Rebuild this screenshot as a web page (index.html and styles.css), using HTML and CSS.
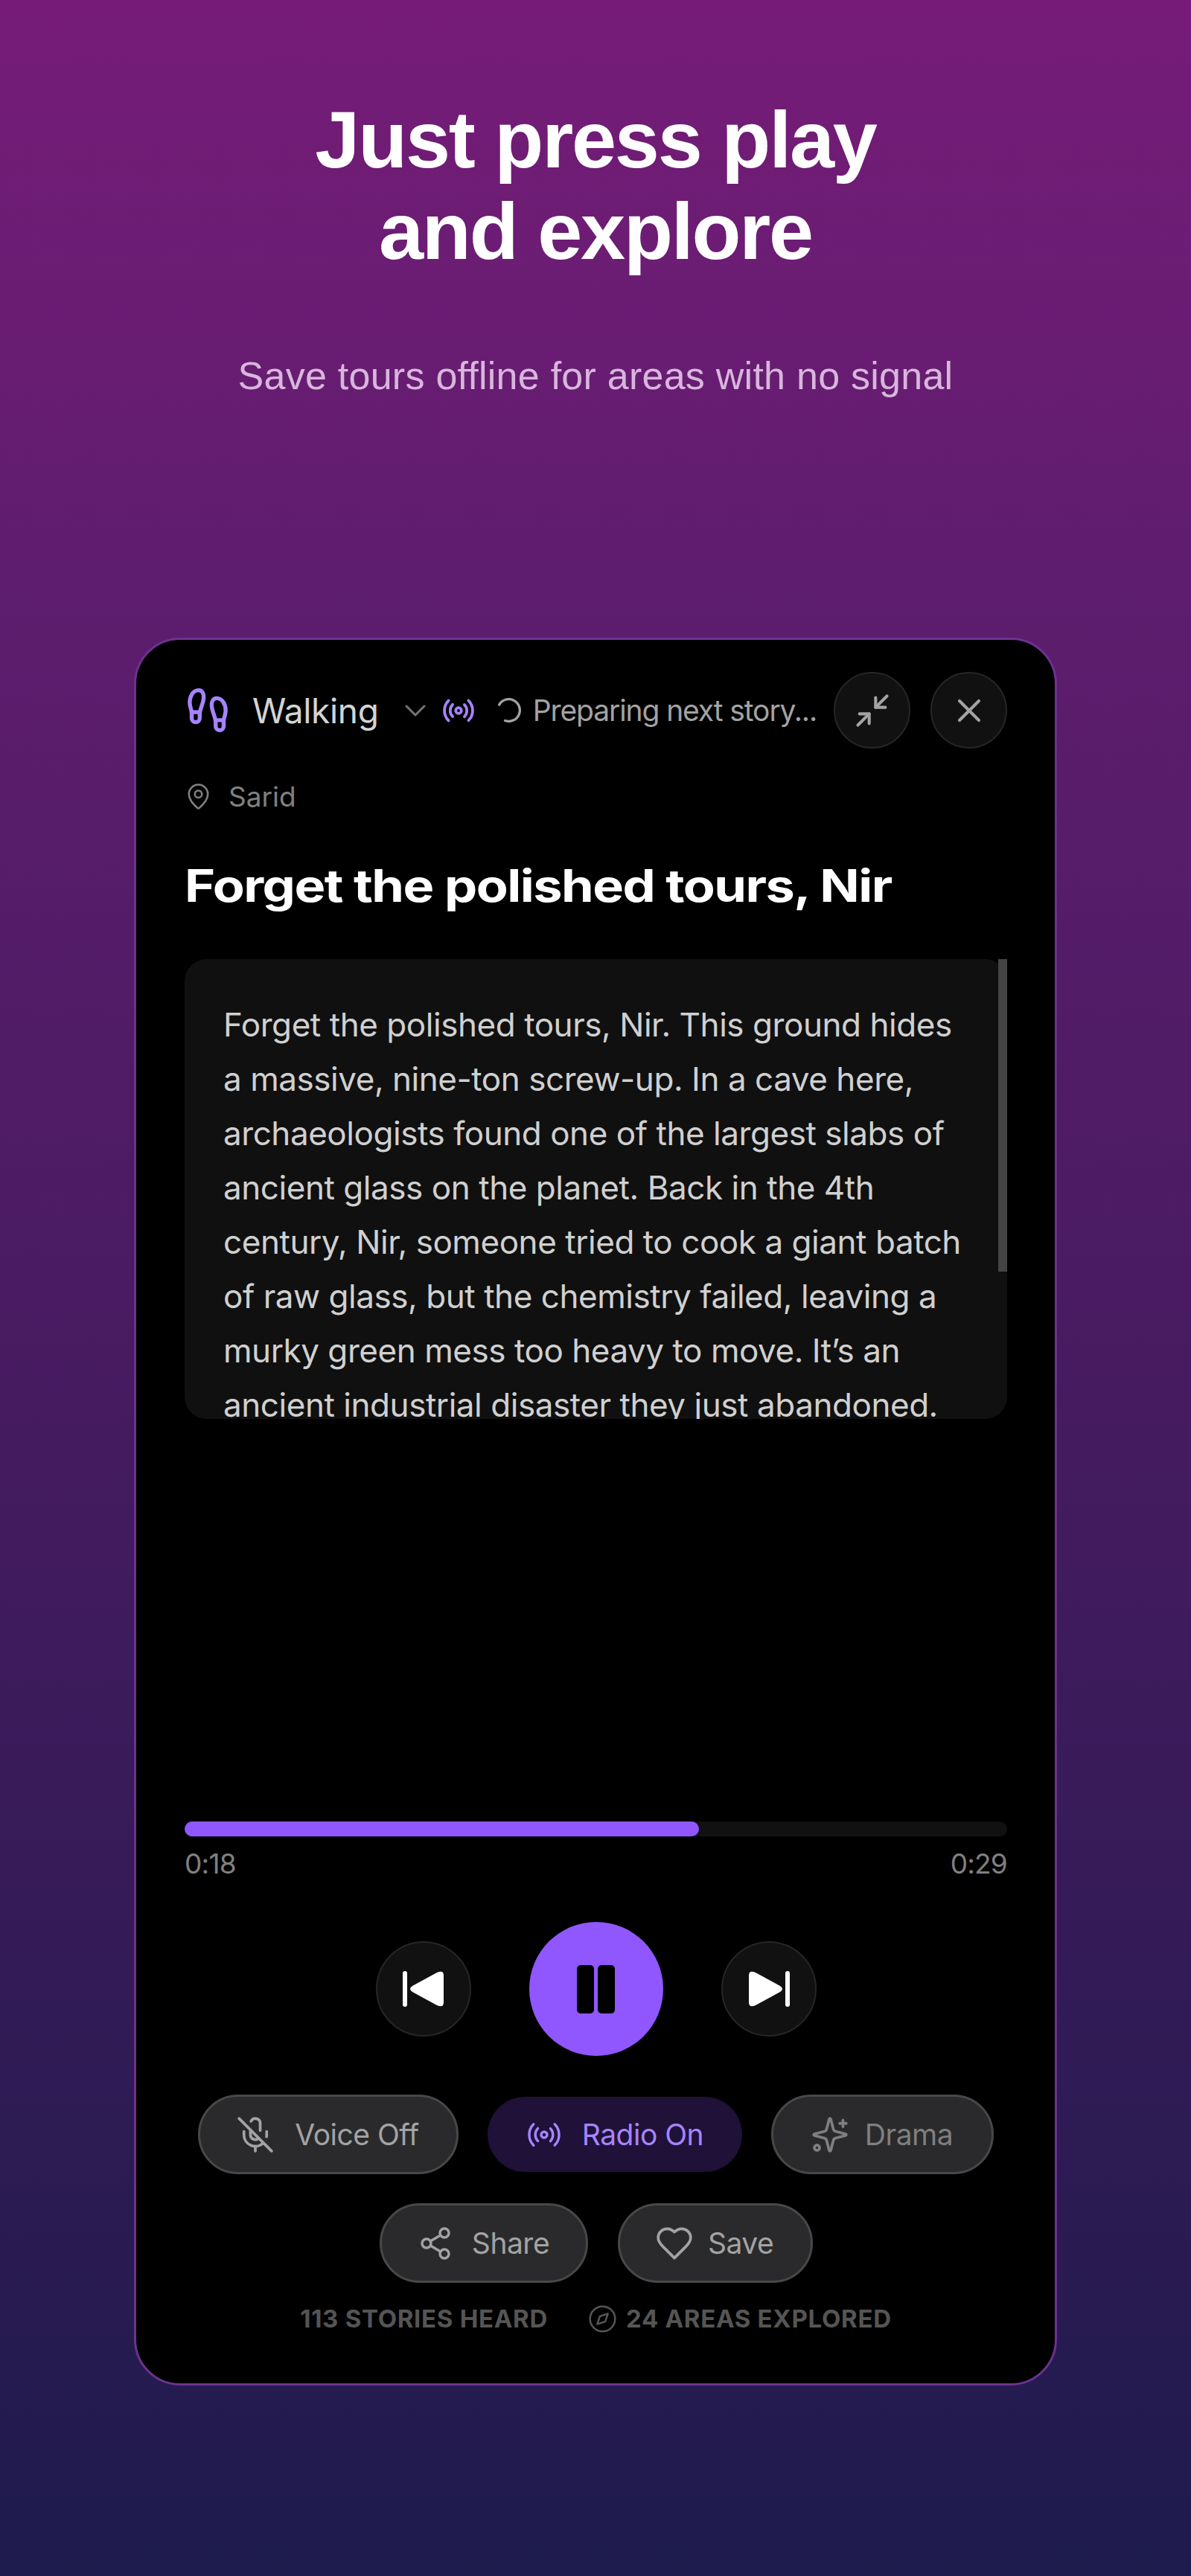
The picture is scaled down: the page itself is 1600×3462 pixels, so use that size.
FILE: index.html
```html
<!DOCTYPE html>
<html lang="en">
<head>
    <meta charset="UTF-8">
    <meta name="viewport" content="width=device-width, initial-scale=1.0">
    <title>Just press play and explore</title>
    <link rel="stylesheet" href="styles.css">
</head>
<body>

    <header class="hero">
        <h1>Just press play<br>and explore</h1>
        <p class="subtitle">Save tours offline for areas with no signal</p>
    </header>

    <main class="card">
        <div class="top-row">
            <svg class="icon icon-feet" viewBox="2 1 20 22"><path d="M4 16v-2.38C4 11.5 2.97 10.5 3 8c.03-2.72 1.49-6 4.5-6C9.37 2 10 3.8 10 5.5c0 3.11-2 5.66-2 8.68V16a2 2 0 1 1-4 0Z"/><path d="M20 20v-2.38c0-2.12 1.03-3.12 1-5.62-.03-2.72-1.49-6-4.5-6C14.63 6 14 7.8 14 9.5c0 3.11 2 5.66 2 8.68V20a2 2 0 1 0 4 0Z"/><path d="M16 17h4"/><path d="M4 13h4"/></svg>
            <span class="mode">Walking</span>
            <svg class="icon icon-chevron" viewBox="5 8 14 8"><path d="m6 9 6 6 6-6"/></svg>
            <svg class="icon icon-radio" viewBox="1 3 22 18"><path d="M4.9 19.1C1 15.2 1 8.8 4.9 4.9"/><path d="M7.8 16.2c-2.3-2.3-2.3-6.1 0-8.5"/><circle cx="12" cy="12" r="2"/><path d="M16.2 7.8c2.3 2.3 2.3 6.1 0 8.5"/><path d="M19.1 4.9C23 8.8 23 15.1 19.1 19"/></svg>
            <svg class="icon icon-spinner" viewBox="2 2 20 20"><path d="M4.2 7.5A9 9 0 1 1 9 20.5"/></svg>
            <span class="status">Preparing next story...</span>
            <button class="round-btn top-btn first"><svg class="icon" viewBox="0 0 24 24"><path d="m14 10 7-7"/><path d="M20 10h-6V4"/><path d="m3 21 7-7"/><path d="M4 14h6v6"/></svg></button>
            <button class="round-btn top-btn"><svg class="icon" viewBox="0 0 24 24"><path d="M18 6 6 18"/><path d="m6 6 12 12"/></svg></button>
        </div>

        <div class="place">
            <svg class="icon icon-pin" viewBox="3 1 18 22"><path d="M20 10c0 4.993-5.539 10.193-7.399 11.799a1 1 0 0 1-1.202 0C9.539 20.193 4 14.993 4 10a8 8 0 0 1 16 0"/><circle cx="12" cy="10" r="3"/></svg>
            <span>Sarid</span>
        </div>

        <h2 class="story-title">Forget the polished tours, Nir</h2>

        <section class="story">
            <div class="story-clip">
                <p>Forget the polished tours, Nir. This ground hides a massive, nine-ton screw-up. In a cave here, archaeologists found one of the largest slabs of ancient glass on the planet. Back in the 4th century, Nir, someone tried to cook a giant batch of raw glass, but the chemistry failed, leaving a murky green mess too heavy to move. It’s an ancient industrial disaster they just abandoned.</p>
            </div>
            <div class="scrollbar"></div>
        </section>

        <div class="progress"><div class="progress-fill" style="width: 62.5%"></div></div>
        <div class="times"><span>0:18</span><span>0:29</span></div>

        <div class="controls">
            <button class="round-btn skip">
                <svg viewBox="0 0 56 50"><rect x="0" y="1" width="6" height="48" rx="3"/><path d="M13 21 L46 3 Q55 -1 55 7 L55 43 Q55 51 46 47 L13 29 Q7 25 13 21 Z"/></svg>
            </button>
            <button class="play-btn"><span class="bar"></span><span class="bar"></span></button>
            <button class="round-btn skip">
                <svg viewBox="0 0 56 50"><path d="M43 21 L10 3 Q1 -1 1 7 L1 43 Q1 51 10 47 L43 29 Q49 25 43 21 Z"/><rect x="50" y="1" width="6" height="48" rx="3"/></svg>
            </button>
        </div>

        <div class="pills">
            <button class="pill voice">
                <svg class="icon icon-pill" viewBox="1 1 22 22"><line x1="2" x2="22" y1="2" y2="22"/><path d="M18.89 13.23A7.12 7.12 0 0 0 19 12v-2"/><path d="M5 10v2a7 7 0 0 0 12 5"/><path d="M15 9.34V5a3 3 0 0 0-5.68-1.33"/><path d="M9 9v3a3 3 0 0 0 5.12 2.12"/><line x1="12" x2="12" y1="19" y2="22"/></svg>
                Voice Off
            </button>
            <button class="pill radio-on">
                <svg class="icon icon-pill" viewBox="0 0 24 24"><path d="M4.9 19.1C1 15.2 1 8.8 4.9 4.9"/><path d="M7.8 16.2c-2.3-2.3-2.3-6.1 0-8.5"/><circle cx="12" cy="12" r="2"/><path d="M16.2 7.8c2.3 2.3 2.3 6.1 0 8.5"/><path d="M19.1 4.9C23 8.8 23 15.1 19.1 19"/></svg>
                Radio On
            </button>
            <button class="pill drama">
                <svg class="icon icon-pill" viewBox="1 1 22 22"><path d="M9.937 15.5A2 2 0 0 0 8.5 14.063l-6.135-1.582a.5.5 0 0 1 0-.962L8.5 9.936A2 2 0 0 0 9.937 8.5l1.582-6.135a.5.5 0 0 1 .963 0L14.063 8.5A2 2 0 0 0 15.5 9.937l6.135 1.581a.5.5 0 0 1 0 .964L15.5 14.063a2 2 0 0 0-1.437 1.437l-1.582 6.135a.5.5 0 0 1-.963 0z"/><path d="M20 3v4"/><path d="M22 5h-4"/><circle cx="4" cy="20" r="1.6"/></svg>
                Drama
            </button>
        </div>

        <div class="pills second">
            <button class="pill share">
                <svg class="icon icon-pill" viewBox="0 0 24 24"><circle cx="18" cy="5" r="3"/><circle cx="6" cy="12" r="3"/><circle cx="18" cy="19" r="3"/><line x1="8.59" x2="15.42" y1="13.51" y2="17.49"/><line x1="15.41" x2="8.59" y1="6.51" y2="10.49"/></svg>
                Share
            </button>
            <button class="pill save">
                <svg class="icon icon-pill" viewBox="1 1 22 22"><path d="M19 14c1.49-1.46 3-3.21 3-5.5A5.5 5.5 0 0 0 16.5 3c-1.76 0-3 .5-4.5 2-1.5-1.5-2.74-2-4.5-2A5.5 5.5 0 0 0 2 8.5c0 2.3 1.5 4.05 3 5.5l7 7Z"/></svg>
                Save
            </button>
        </div>

        <div class="stats">
            <span>113 STORIES HEARD</span>
            <span class="stat-areas">
                <svg class="icon icon-compass" viewBox="1 1 22 22"><circle cx="12" cy="12" r="10"/><polygon points="16.24 7.76 14.12 14.12 7.76 16.24 9.88 9.88"/></svg>
                24 AREAS EXPLORED
            </span>
        </div>
    </main>

</body>
</html>
```

FILE: styles.css
```css
* {
    box-sizing: border-box;
}

body {
    margin: 0;
    height: 3462px;
    overflow: hidden;
    font-family: 'Inter', sans-serif;
    background: linear-gradient(180deg, #761c78 0%, #5c1d6d 25%, #4a1b62 50%, #1e1b4d 100%);
    color: #fff;
}

.hero {
    text-align: center;
    padding-top: 126px;
}

h1 {
    margin: 0;
    font-family: 'Liberation Sans', Arial, sans-serif;
    font-size: 108px;
    line-height: 123px;
    font-weight: 700;
    letter-spacing: -2.2px;
}

.subtitle {
    margin: 102px 0 0;
    font-family: 'Liberation Sans', Arial, sans-serif;
    font-size: 52px;
    line-height: 62px;
    letter-spacing: 0.25px;
    color: #d8b6dc;
}

.card {
    width: 1240px;
    height: 2349px;
    margin: 321px auto 0;
    padding: 43px 64px 0 65px;
    background: #000;
    border: 3px solid #6d3290;
    border-radius: 62px;
}

.icon {
    display: block;
    flex: none;
    fill: none;
    stroke: currentColor;
    stroke-width: 2;
    stroke-linecap: round;
    stroke-linejoin: round;
}

/* top row */
.top-row {
    display: flex;
    align-items: center;
    height: 103px;
}

.icon-feet {
    width: 54px;
    height: 59px;
    margin-left: 4px;
    color: #a684ff;
}

.mode {
    margin-left: 33px;
    font-size: 46px;
    color: #d4d4d4;
    letter-spacing: -0.3px;
}

.icon-chevron {
    width: 28px;
    height: 16px;
    margin-left: 35px;
    color: #737373;
    stroke-width: 1.5;
}

.icon-radio {
    width: 42px;
    height: 34px;
    margin-left: 23px;
    color: #a684ff;
}

.icon-spinner {
    width: 33px;
    height: 33px;
    margin-left: 30px;
    color: #a3a3a3;
}

.status {
    margin-left: 16px;
    font-size: 39px;
    color: #a3a3a3;
    letter-spacing: -1.1px;
    white-space: nowrap;
}

.round-btn {
    display: flex;
    align-items: center;
    justify-content: center;
    padding: 0;
    background: #111;
    border: 2px solid #262626;
    border-radius: 50%;
}

.top-btn {
    width: 103px;
    height: 103px;
    margin-left: 27px;
    flex: none;
    color: #a3a3a3;
}

.top-btn.first {
    margin-left: auto;
}

.top-btn svg {
    width: 52px;
    height: 52px;
    stroke-width: 1.9;
}

.place {
    display: flex;
    align-items: center;
    gap: 26px;
    margin-top: 44px;
    height: 40px;
    padding-left: 4px;
    font-size: 37px;
    color: #808080;
}

.icon-pin {
    width: 29px;
    height: 35px;
    stroke-width: 1.6;
}

.story-title {
    margin: 64px 0 0;
    font-size: 60px;
    line-height: 72px;
    font-weight: 700;
    letter-spacing: -1.3px;
    white-space: nowrap;
    transform: scaleX(1.17);
    transform-origin: left center;
}

/* story box */
.story {
    position: relative;
    height: 618px;
    margin-top: 63px;
    background: #101010;
    border-radius: 30px;
}

.story-clip {
    height: 100%;
    padding: 52px 50px 0 52px;
    border-radius: 30px;
    overflow: hidden;
}

.story p {
    margin: 0;
    font-size: 44px;
    line-height: 73px;
    color: #d0d0d0;
    letter-spacing: -0.45px;
}

.scrollbar {
    position: absolute;
    top: 0;
    right: 0;
    width: 12px;
    height: 420px;
    background: #444;
}

/* player */
.progress {
    height: 20px;
    margin-top: 541px;
    background: #111;
    border-radius: 10px;
}

.progress-fill {
    height: 100%;
    background: #9057ff;
    border-radius: 10px;
}

.times {
    display: flex;
    justify-content: space-between;
    margin-top: 15px;
    font-size: 37px;
    line-height: 44px;
    color: #808080;
    letter-spacing: -0.8px;
}

.controls {
    display: flex;
    align-items: center;
    justify-content: center;
    gap: 78px;
    margin-top: 56px;
}

.skip {
    width: 128px;
    height: 128px;
}

.skip svg {
    width: 56px;
    height: 50px;
    fill: #fff;
}

.play-btn {
    display: flex;
    align-items: center;
    justify-content: center;
    gap: 5px;
    width: 180px;
    height: 180px;
    padding: 0;
    background: #9057ff;
    border: none;
    border-radius: 50%;
}

.bar {
    width: 23px;
    height: 65px;
    background: #000;
    border-radius: 5px;
}

.pills {
    display: flex;
    align-items: center;
    justify-content: center;
    gap: 39px;
    margin-top: 52px;
}

.pills.second {
    margin-top: 39px;
    gap: 40px;
}

.pill {
    display: flex;
    align-items: center;
    justify-content: center;
    height: 107px;
    padding: 0;
    font-family: 'Inter', sans-serif;
    font-size: 39px;
    letter-spacing: -0.5px;
    background: #2a2a2c;
    border: 3px solid #484848;
    border-radius: 54px;
    color: #a3a3a3;
}

.icon-pill {
    width: 48px;
    height: 48px;
    stroke-width: 1.7;
}

.voice {
    width: 350px;
    gap: 29px;
}

.radio-on {
    width: 342px;
    height: 101px;
    gap: 27px;
    background: #1f1138;
    border: none;
    color: #a684ff;
}

.drama {
    width: 299px;
    gap: 23px;
    color: #7f7f7f;
}

.share {
    width: 280px;
    gap: 25px;
}

.save {
    width: 262px;
    gap: 21px;
}

.stats {
    display: flex;
    align-items: center;
    justify-content: center;
    gap: 55px;
    margin-top: 28px;
    font-size: 33px;
    font-weight: 700;
    letter-spacing: 0.7px;
    color: #555;
}

.stat-areas {
    display: flex;
    align-items: center;
    gap: 13px;
}

.icon-compass {
    width: 37px;
    height: 37px;
    stroke-width: 1.5;
}
```
